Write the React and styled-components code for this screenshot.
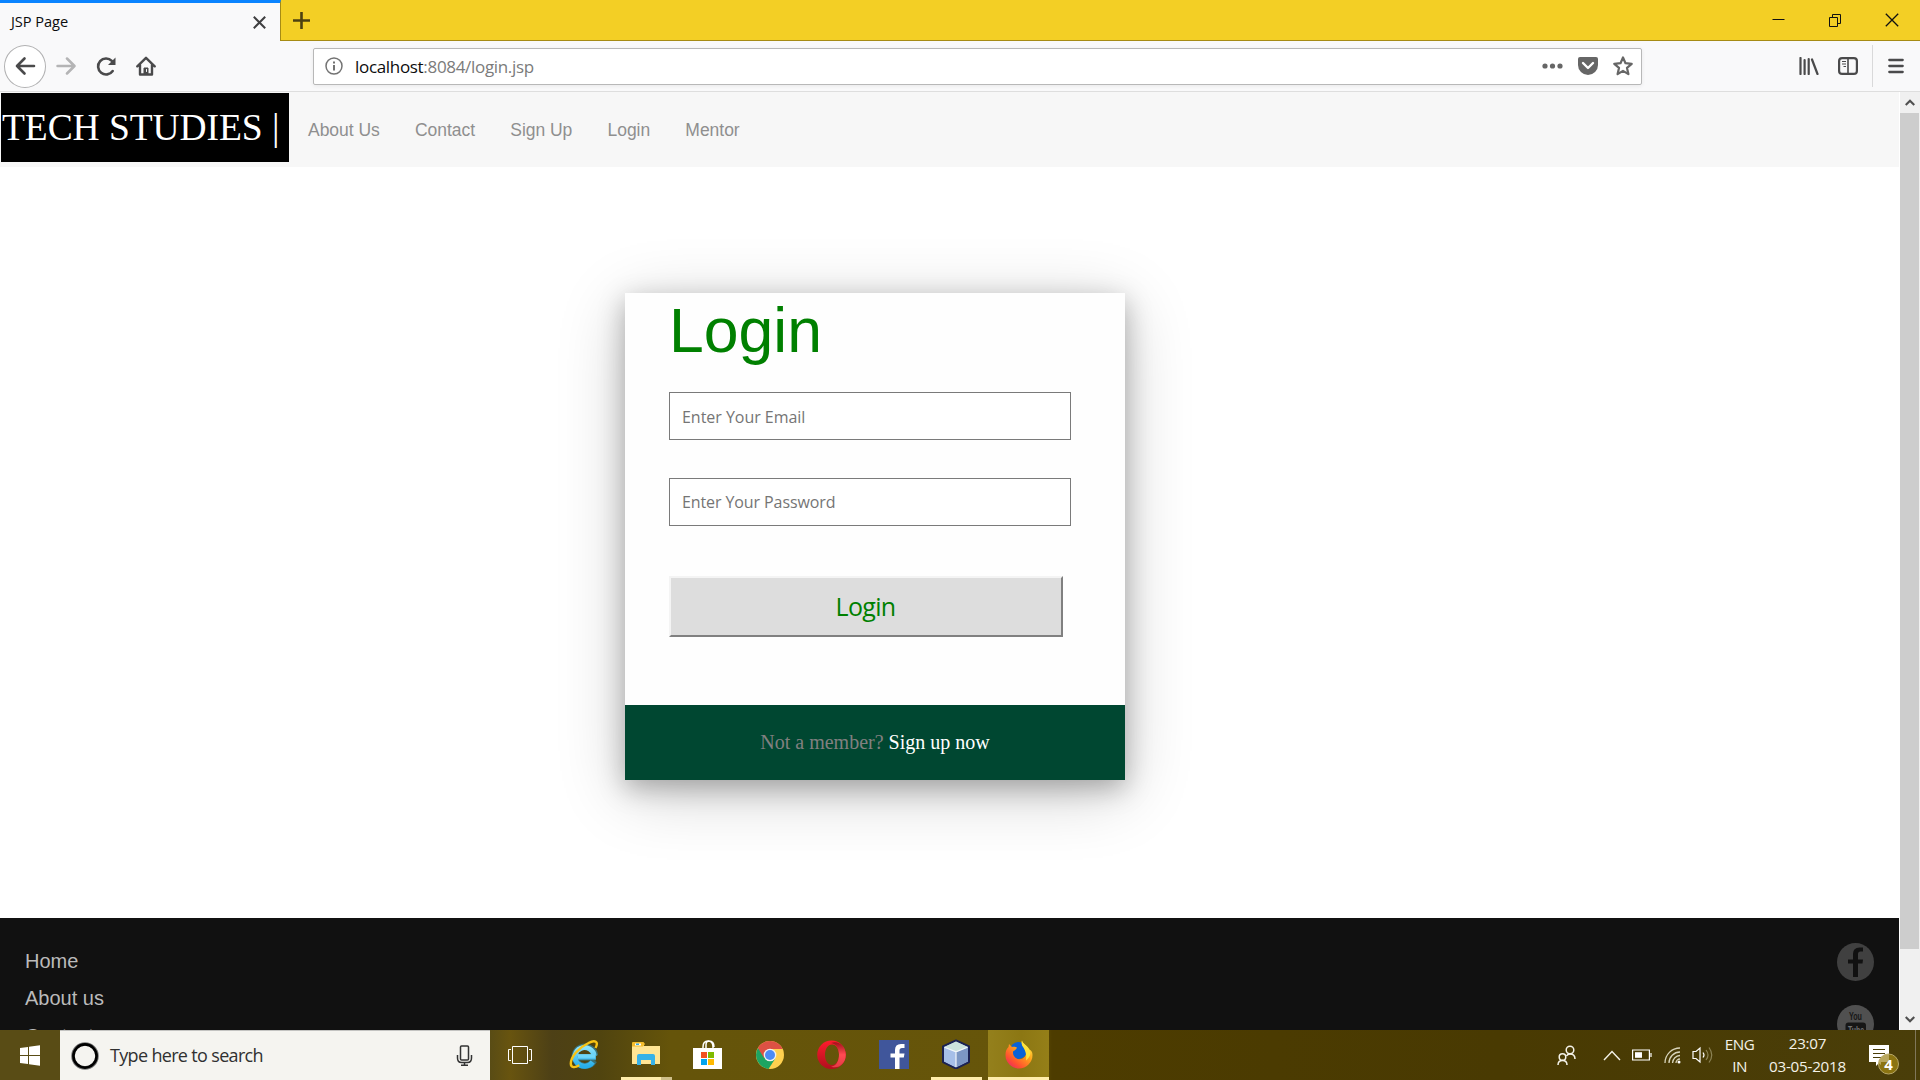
import React from "react";
import styled, { createGlobalStyle } from "styled-components";

const ui = `"Open Sans", "Noto Sans", sans-serif`;
const arial = `"Liberation Sans", Arial, sans-serif`;
const serif = `"Liberation Serif", "Times New Roman", serif`;

const Global = createGlobalStyle`
  *, *::before, *::after { box-sizing: border-box; }
  body { margin: 0; overflow: hidden; }
  svg { display: block; flex: none; }
`;

const Screen = styled.div`
  width: 1920px;
  height: 1080px;
  display: grid;
  grid-template-rows: 41px 51px 938px 50px;
  background: #fff;
  overflow: hidden;
`;

/* Browser chrome */
const TitleBar = styled.div`
  display: flex;
  background: #f3cf25;
  border-bottom: 1px solid #a68b14;
`;
const Tab = styled.div`
  width: 281px;
  height: 41px;
  display: flex;
  align-items: center;
  justify-content: space-between;
  padding: 0 14px 0 11px;
  background: #f9f9fa;
  border-top: 3px solid #0a84ff;
  border-right: 1px solid #a68b14;
`;
const TabTitle = styled.span`
  font: 14.6px/20px ${ui};
  letter-spacing: -0.05px;
  padding-bottom: 2px;
  color: #0c0c0d;
`;
const NewTab = styled.div`
  display: flex;
  align-items: center;
  padding-left: 11px;
  flex: 1;
`;
const WindowButtons = styled.div`
  display: flex;
  align-items: center;
  gap: 43px;
  padding-right: 21px;
`;
const Toolbar = styled.div`
  display: flex;
  align-items: center;
  background: #f9f9fa;
  border-bottom: 1px solid #dedede;
  padding-left: 4px;
`;
const NavButtons = styled.div`
  display: flex;
  align-items: center;
  gap: 20px;
  width: 309px;
  svg:last-child { margin-left: -1px; }
`;
const BackButton = styled.div`
  width: 42px;
  height: 43px;
  border: 1px solid #b1b1b2;
  border-radius: 50%;
  background: #fff;
  display: grid;
  place-items: center;
  margin-right: -10px;
`;
const AddressBar = styled.div`
  width: 1329px;
  height: 37px;
  display: flex;
  align-items: center;
  padding: 0 8px 0 11px;
  background: #fff;
  border: 1px solid #b8b8b8;
  border-radius: 2px;
  box-shadow: 0 1px 4px rgba(0, 0, 0, 0.07);
`;
const Url = styled.span`
  flex: 1;
  margin-left: 12px;
  padding-top: 1px;
  font: 17px/24px ${ui};
  letter-spacing: -0.32px;
  color: #7b7b7b;
  b { font-weight: 400; color: #0c0c0d; }
`;
const AddressActions = styled.div`
  display: flex;
  align-items: center;
  gap: 15px;
`;
const ToolbarRight = styled.div`
  display: flex;
  align-items: center;
  flex: 1;
  justify-content: flex-end;
  padding-right: 16px;
`;
const Separator = styled.div`
  width: 1px;
  height: 42px;
  background: #d9d9da;
  margin: 0 15px 0 14px;
`;

/* Page */
const Viewport = styled.div`
  display: grid;
  grid-template-columns: 1899px 21px;
  overflow: hidden;
`;
const Page = styled.div`
  height: 938px;
  overflow: hidden;
  display: grid;
  grid-template-rows: 75px 751px 112px;
`;
const Navbar = styled.nav`
  display: flex;
  background: #f7f7f7;
  padding: 1px 0 5px 1px;
`;
const Brand = styled.div`
  width: 288px;
  height: 69px;
  background: #000;
  color: #fff;
  padding-left: 1px;
  font: 37.5px/70px ${serif};
  letter-spacing: -0.07px;
  white-space: nowrap;
`;
const NavLinks = styled.div`
  display: flex;
  gap: 35.2px;
  padding-left: 19px;
  font: 17.5px/74px ${arial};
  letter-spacing: -0.03px;
  color: #8f8f8f;
`;
const Main = styled.main`
  padding: 126px 0 0 625px;
`;
const Card = styled.section`
  width: 500px;
  height: 487px;
  display: flex;
  flex-direction: column;
  background: #fefefe;
  box-shadow: 0 8px 25px 0 rgba(0, 0, 0, 0.27), 0 13px 64px 0 rgba(0, 0, 0, 0.2);
`;
const Form = styled.form`
  height: 412px;
  padding: 0 0 0 44px;
`;
const Heading = styled.h1`
  margin: 0;
  height: 99px;
  padding-top: 1px;
  font: 400 62.5px/72px ${arial};
  color: #008000;
`;
const Field = styled.input`
  display: block;
  width: 402px;
  height: 48px;
  margin: 0 0 38px;
  padding: ${(p) => (p.type === "password" ? 0 : 2)}px 12px 0;
  border: 1px solid #7a7a7a;
  border-radius: 0;
  background: #fff;
  font: 16px/24px ${ui};
  letter-spacing: ${(p) => (p.type === "password" ? -0.1 : -0.03)}px;
  outline: none;
  &::placeholder { color: #757575; opacity: 1; }
`;
const Submit = styled.button`
  display: block;
  width: 394px;
  height: 61px;
  margin-top: 50px;
  padding: 0 1px 0 0;
  border: 2px solid;
  border-color: #f4f4f4 #808080 #808080 #f4f4f4;
  background: #ddd;
  color: #008000;
  font: 25px/57px ${ui};
  letter-spacing: -0.7px;
`;
const CardFooter = styled.div`
  height: 75px;
  background: #004731;
  text-align: center;
  font: 20px/75px ${serif};
  color: #808080;
  span { color: #fff; }
`;
const Footer = styled.footer`
  display: flex;
  justify-content: space-between;
  background: #111;
  padding: 24px 25px 0;
  overflow: hidden;
`;
const FooterLinks = styled.div`
  padding-top: 0.6px;
  font: 20px/37.6px ${arial};
  color: #bbb;
`;
const Social = styled.div`
  display: flex;
  flex-direction: column;
  gap: 24px;
  padding-top: 1px;
`;
const Scrollbar = styled.div`
  display: flex;
  flex-direction: column;
  align-items: center;
  background: #f0f0f0;
  border-left: 1px solid #fff;
`;
const ScrollArrow = styled.div`
  height: 21px;
  display: grid;
  place-items: center;
`;
const Thumb = styled.div`
  width: 19px;
  height: 836px;
  margin: 0 1px 60px 0;
  background: #cdcdcd;
`;

/* Taskbar */
const Taskbar = styled.div`
  display: flex;
  background: linear-gradient(90deg, #594c15 0, #594c15 490px, #68540f 510px, #4d4016 552px, #50440f 600px, #65540a 670px, #66550a 1040px, #4d3c00 1052px, #493a02 1500px, #4a3e09 1920px);
`;
const Start = styled.div`
  width: 60px;
  display: grid;
  place-items: center;
`;
const Search = styled.div`
  width: 430px;
  display: flex;
  align-items: center;
  padding: 0 17px 0 11px;
  background: #f5f4f0;
  border-top: 1px solid #c3c3c1;
`;
const SearchText = styled.span`
  flex: 1;
  margin-left: 11px;
  padding-bottom: 1px;
  font: 18px/26px ${ui};
  letter-spacing: -0.67px;
  color: #303030;
`;
const Apps = styled.div`
  display: flex;
  width: 559px;
`;
const TaskItem = styled.div`
  width: ${(p) => (p.$active ? 61 : 62)}px;
  margin-left: ${(p) => (p.$active ? 1 : 0)}px;
  height: 50px;
  display: flex;
  flex-direction: column;
  align-items: center;
  justify-content: space-between;
  padding-top: 9px;
  background: ${(p) => (p.$active ? "linear-gradient(90deg, #94801c, #8c7713 55%, #957f18)" : "transparent")};
  &:first-child { width: 63px; padding-right: 3px; }
`;
const Indicator = styled.div`
  width: ${(p) => p.$w || 0}px;
  height: 3px;
  background: ${(p) => (p.$split ? "linear-gradient(90deg, #ffedab 40px, #cfbf8a 40px)" : "#ffedab")};
`;
const Tray = styled.div`
  flex: 1;
  display: flex;
  justify-content: flex-end;
  align-items: center;
  color: #f4f2e8;
  padding-right: 4px;
`;
const TrayIcons = styled.div`
  display: flex;
  align-items: center;
  gap: 11.3px;
`;
const TrayText = styled.div`
  width: ${(p) => p.$w}px;
  text-align: center;
  font: 15.2px/${(p) => p.$lh || 22}px ${ui};
  letter-spacing: ${(p) => p.$ls || "-0.5px"};
  white-space: pre-line;
  padding-bottom: 1px;
`;
const Notify = styled.div`
  width: 67px;
  height: 50px;
  display: flex;
  justify-content: flex-end;
  padding-right: 16px;
  border-right: 1px solid #80775a;
`;

const Ico = ({ w, h = w, vb, children, ...rest }) => (
  <svg width={w} height={h} viewBox={vb || `0 0 ${w} ${h}`} fill="none" stroke="#4a4a4b" {...rest}>
    {children}
  </svg>
);

const Cross = ({ w, sw, c }) => (
  <Ico w={w} stroke={c} strokeWidth={sw}><path d={`M.8.8 ${w - 0.8} ${w - 0.8}M${w - 0.8}.8.8 ${w - 0.8}`} /></Ico>
);

const BrowserChrome = () => (
  <>
    <TitleBar>
      <Tab><TabTitle>JSP Page</TabTitle><Cross w={13} sw={2} c="#3f3f40" /></Tab>
      <NewTab><Ico w={19} stroke="#4c4111" strokeWidth="2.6"><path d="M9.5 1v17M1 9.5h17" /></Ico></NewTab>
      <WindowButtons>
        <Ico w={13} stroke="#111" strokeWidth="1"><path d="M.5 5.5h12" /></Ico>
        <Ico w={14} stroke="#111" strokeWidth="1"><path d="M1.5 4.5h8v9h-8zM4.500 4V1.500h8v9h-3" /></Ico>
        <Cross w={14} sw={1.3} c="#111" />
      </WindowButtons>
    </TitleBar>
    <Toolbar>
      <NavButtons>
        <BackButton>
          <Ico w={22} strokeWidth="2.6" strokeLinecap="round" strokeLinejoin="round"><path d="M20 11H3M10.500 3.500 3 11l7.500 7.500" /></Ico>
        </BackButton>
        <Ico w={20} h={20} stroke="#b4b4b5" strokeWidth="2.500" strokeLinecap="round" strokeLinejoin="round"><path d="M1.500 10H18M11 2.500 18.500 10 11 17.500" /></Ico>
        <Ico w={21} h={21} strokeWidth="2.600" strokeLinecap="round"><path d="M16.700 15A8 8 0 1 1 15.800 4.800" /><path d="M19.500 1.500v7.500h-7.500z" fill="#4a4a4b" stroke="none" /></Ico>
        <Ico w={20} h={20} strokeWidth="2.400" strokeLinecap="round" strokeLinejoin="round">
          <path d="M1.300 10.300 10 1.800l8.700 8.500M4 9v9.500h12V9" /><path d="M8 18v-6h4v6" fill="#4a4a4b" strokeWidth="1" /><path d="M10.500 13.500v2" stroke="#f9f9fa" strokeWidth="1" />
        </Ico>
      </NavButtons>
      <AddressBar>
        <Ico w={18} stroke="#737373" strokeWidth="1.500"><circle cx="9" cy="9" r="8" /><path d="M9 8v5.500M9 4.500v2" strokeWidth="2" /></Ico>
        <Url><b>localhost</b>:8084/login.jsp</Url>
        <AddressActions>
          <Ico w={21} h={6} stroke="none" fill="#666"><circle cx="3" cy="3" r="2.600" /><circle cx="10.500" cy="3" r="2.600" /><circle cx="18" cy="3" r="2.600" /></Ico>
          <Ico w={20} h={18} stroke="none"><path d="M2 0h16q2 0 2 2v6a10 10 0 0 1-20 0V2q0-2 2-2z" fill="#666" /><path d="m5 6 5 5 5-5" stroke="#fff" strokeWidth="2.400" strokeLinecap="round" strokeLinejoin="round" /></Ico>
          <Ico w={20} h={20} stroke="#666" strokeWidth="2.200" strokeLinejoin="round"><path d="m10 1.500 2.500 5.700 6.200.6-4.700 4.100 1.400 6.200L10 14.900l-5.400 3.200L6 11.900 1.300 7.800l6.200-.6z" /></Ico>
        </AddressActions>
      </AddressBar>
      <ToolbarRight>
        <Ico w={20} h={18} strokeWidth="2.200" strokeLinecap="round"><path d="M1.500 1v16M5.600 3v14M9.700 2v15M13 2.500 18.500 17" /></Ico>
        <Ico w={20} h={18} strokeWidth="2.200" style={{ marginLeft: 19 }}><rect x="1.100" y="1.100" width="17.800" height="15.800" rx="3" /><path d="M10 1v16" strokeWidth="1.600" /><path d="M4 4.500h4M4 7h4M5.500 9.500H8" strokeWidth="1.200" /></Ico>
        <Separator />
        <Ico w={16} h={16} strokeWidth="2.300" strokeLinecap="round"><path d="M1.300 2h13.400M1.300 8h13.400M1.300 14h13.400" /></Ico>
      </ToolbarRight>
    </Toolbar>
  </>
);

const links = ["About Us", "Contact", "Sign Up", "Login", "Mentor"];

const LoginPage = () => (
  <Page>
    <Navbar>
      <Brand>TECH STUDIES |</Brand>
      <NavLinks>{links.map((l) => <span key={l}>{l}</span>)}</NavLinks>
    </Navbar>
    <Main>
      <Card>
        <Form>
          <Heading>Login</Heading>
          <Field placeholder="Enter Your Email" />
          <Field type="password" placeholder="Enter Your Password" />
          <Submit type="button">Login</Submit>
        </Form>
        <CardFooter>Not a member? <span>Sign up now</span></CardFooter>
      </Card>
    </Main>
    <Footer>
      <FooterLinks><div>Home</div><div>About us</div><div>Contact</div></FooterLinks>
      <Social>
        <Ico w={37} h={38} stroke="none">
          <ellipse cx="18.500" cy="19" rx="18.500" ry="19" fill="#404040" />
          <path d="M16 34V20.500h-5v-4h5V11q0-6.500 6.500-6.500h3.500V8.500h-2.500q-2.500 0-2.500 2.500v5.500h5l-.5 4H21V34z" fill="#111" />
        </Ico>
        <Ico w={37} h={38} stroke="none">
          <ellipse cx="18.500" cy="19" rx="18.500" ry="19" fill="#505050" />
          <text x="12" y="15" textLength="13" lengthAdjust="spacingAndGlyphs" fontFamily="Liberation Sans" fontWeight="700" fontSize="11" fill="#161616">You</text>
          <rect x="8.500" y="17.500" width="20.500" height="14" rx="3" fill="#161616" />
          <text x="11" y="28.500" textLength="16" lengthAdjust="spacingAndGlyphs" fontFamily="Liberation Sans" fontWeight="700" fontSize="10.500" fill="#707070">Tube</text>
        </Ico>
      </Social>
    </Footer>
  </Page>
);

const Explorer = () => (
  <Ico w={30} h={30} stroke="none">
    <path d="M1 4h12v3h16v18H1z" fill="#ffe594" /><path d="M1 4q0-1 1-1h10.500L14 5l-2 2.500H1z" fill="#f5bd2c" /><path d="M4 4.500h6v2H4z" fill="#fff" /><path d="M5 4.500h3v1.500H5z" fill="#37a9dc" />
    <path d="M6 26V17q0-2 2-2h14q2 0 2 2v9h-4v-5H10v5z" fill="#37b2e8" />
  </Ico>
);
const Store = () => (
  <Ico w={30} h={30} stroke="none">
    <path d="M10 10V8q0-6 5-6t5 6v2M13 9V6q0-4 3-4 5 0 5 6" stroke="#fff" strokeWidth="1.500" /><path d="M0 9h29v21H0z" fill="#fff" />
    <path d="M8 13h6v6H8z" fill="#f25022" /><path d="M15 13h6v6h-6z" fill="#7fba00" /><path d="M8 20h6v6H8z" fill="#00a4ef" /><path d="M15 20h6v6h-6z" fill="#ffb900" />
  </Ico>
);
const Chrome = () => (
  <Ico w={30} h={30} stroke="none">
    <circle cx="15" cy="16" r="14" fill="#ffd04f" />
    <path d="M15 16 2.900 9A14 14 0 0 0 13.500 29.900L20 20z" fill="#1da462" />
    <path d="M2.900 9A14 14 0 0 1 27.600 10H15L9 19z" fill="#dd5144" />
    <circle cx="15" cy="16" r="6.300" fill="#f1f1f1" /><circle cx="15" cy="16" r="5" fill="#4c8bf5" />
  </Ico>
);
const Opera = () => (
  <Ico w={30} h={30} stroke="none">
    <defs><linearGradient id="op" x2="0" y2="1"><stop stopColor="#ff1b2d" /><stop offset="1" stopColor="#b0101d" /></linearGradient><linearGradient id="op2" x2="0" y2="1"><stop stopColor="#a0101a" /><stop offset=".5" stopColor="#ff4b53" /><stop offset="1" stopColor="#e33c45" /></linearGradient></defs>
    <path fillRule="evenodd" d="M14.500 1.500a14.300 14.300 0 1 1 0 28.600 14.300 14.300 0 0 1 0-28.600zm.5 4c-4.200 0-7 4.500-7 10.300s2.800 10.300 7 10.300 7-4.500 7-10.300S19.200 5.500 15 5.500z" fill="url(#op)" />
    <path d="M14 4c7-3 14.800 2.500 14.800 11.800S21 30.500 14 27.500c5 0 8-5.500 8-11.700S19 4.500 14 4z" fill="url(#op2)" />
  </Ico>
);
const Facebook = () => (
  <Ico w={30} h={30} stroke="none"><path d="M0 1h30v29H0z" fill="#40569b" /><path d="M16 30V18.500h-4.500v-4H16V11q0-6 6-6h3.500v4H23q-2.500 0-2.500 2.500v3h5l-.7 4h-4.300V30z" fill="#fff" /></Ico>
);
const Cube = () => (
  <Ico w={30} h={30} stroke="none">
    <path d="m15 1.500 13 6V23L15 29.500 2 23V7.500z" fill="#b4c8e8" stroke="#1b2253" strokeWidth="2" strokeLinejoin="round" />
    <path d="m15 2.500 12 5.500-12 5-12-5z" fill="#cce3dc" /><path d="M3 8.500 15 13v15.500L3 22.500z" fill="#a6bfe8" /><path d="M27 8.500 15 13v15.500l12-6z" fill="#7c97c4" /><path d="M3.500 8.200 15 12.800l11.500-4.600M15 13v15" stroke="#f2f6fb" strokeWidth="1.200" />
  </Ico>
);
const Firefox = () => (
  <Ico w={30} h={30} stroke="none">
    <defs><linearGradient id="ff" x1=".9" y1="0" x2=".1" y2="1"><stop stopColor="#fff04a" /><stop offset=".4" stopColor="#ffa21a" /><stop offset=".75" stopColor="#ff5030" /><stop offset="1" stopColor="#e3206f" /></linearGradient></defs>
    <circle cx="14.500" cy="11.500" r="8.500" fill="#0a62d8" />
    <path d="M18 1.500c0 3 6 5 6.500 9C28 11 28.500 14 28.500 16A13.500 13.500 0 0 1 1.500 16c0-4 1-6 3-8l.5-3 3 3c2-.5 4 0 5 .8-1 2-2.500 3-4 3.700 0 2 0 3 1 4.500 2 3.500 7 4.500 10.500 1C24 14.500 21 9 18.500 7c-1-2-1-4-.5-5.500z" fill="url(#ff)" />
    <path d="M18 1.500c0 3 6 5 8 10 1 3 0 7-4 10 1-6-1-11-3.500-14.500-1-2-1-4-.5-5.500z" fill="#ffe23c" />
  </Ico>
);
const InternetExplorer = () => (
  <Ico w={30} h={30} stroke="none">
    <defs><linearGradient id="ie" x2="0" y2="1"><stop stopColor="#8be2fb" /><stop offset="1" stopColor="#27aeea" /></linearGradient></defs>
    <path d="M8.500 18.500H27M26.200 16.500a10.300 9.600 0 1 0-1 5" stroke="#239fdd" strokeWidth="6" opacity=".5" />
    <path d="M8.500 18H26.800M25.200 17a9.700 9.300 0 1 0-1.500 6" stroke="url(#ie)" strokeWidth="5" />
    <path d="M9 17h17" stroke="#6fd6f8" strokeWidth="3.600" />
    <path d="M26.500 9C30 2.500 26 .5 19.500 4 10 8.500 2 17.500 1.800 24.500c0 4.500 4.200 4.500 8.500 1.800" stroke="#f8c315" strokeWidth="2.400" />
  </Ico>
);
const TaskView = () => (
  <Ico w={26} h={30} stroke="#fff" strokeWidth="1"><path d="M5.500 7.500h15v17h-15zM4 10.500H1.500v11H4M22 10.500h2.500v11H22" /></Ico>
);

const apps = [
  { icon: TaskView }, { icon: InternetExplorer }, { icon: Explorer, w: 51, split: true }, { icon: Store }, { icon: Chrome },
  { icon: Opera }, { icon: Facebook }, { icon: Cube, w: 51 }, { icon: Firefox, w: 61, active: true },
];

const WindowsTaskbar = () => (
  <Taskbar>
    <Start>
      <Ico w={20} h={21} stroke="none" fill="#fff"><path d="M0 3 8 2v8H0zM9 1.800 20 .3V10H9zM0 11h8v8L0 18zM9 11h11v9.700l-11-1.500z" /></Ico>
    </Start>
    <Search>
      <Ico w={28} stroke="#000"><circle cx="14" cy="14" r="12" stroke="#777" strokeWidth="3.600" /><circle cx="14" cy="14" r="11.600" strokeWidth="2.600" /></Ico>
      <SearchText>Type here to search</SearchText>
      <Ico w={17} h={21} stroke="#333" strokeWidth="1.500"><rect x="4.500" y="1" width="8" height="14" rx="1" /><path d="M1.500 10v3q0 4.500 4 4.500h6q4 0 4-4.500v-3M8.500 17.500V20M5 20.200h7" /></Ico>
    </Search>
    <Apps>
      {apps.map(({ icon: I, w, split, active }, i) => (
        <TaskItem key={i} $active={active}><I /><Indicator $w={w} $split={split} /></TaskItem>
      ))}
    </Apps>
    <Tray>
      <TrayIcons>
        <Ico w={20} h={21} stroke="#f4f2e8" strokeWidth="1.500"><circle cx="13" cy="5" r="3.800" /><circle cx="5.500" cy="12" r="3.300" /><path d="M1 20q0-4.500 4.500-4.500T10 20M9.500 11q1-2 3.500-2 5 0 5 5" /></Ico>
        <Ico w={18} h={11} stroke="#f4f2e8" strokeWidth="1.400" style={{ margin: "0 0 0 15px" }}><path d="M1 10 9 1.500l8 8.500" /></Ico>
        <Ico w={20} h={12} stroke="#fff" strokeWidth="1.200"><path d="M.6 1h16.800v10H.6zM19 4v4" /><path d="M3 3.200h7v5.600H3z" fill="#fff" stroke="none" /></Ico>
        <Ico w={17} h={17} stroke="#d9d5bc" strokeWidth="1.300"><path d="M1 16A15 15 0 0 1 16 1M5 16A11 11 0 0 1 16 5M8.500 16A8 8 0 0 1 16 8.500" /><path d="M12 16a4 4 0 0 1 4-4" /><circle cx="15" cy="15" r="1.500" fill="#fff" stroke="none" /></Ico>
        <Ico w={21} h={18} stroke="#fff" strokeWidth="1.200"><path d="M1 5.500h3l4-3.500v14l-4-3.500H1z" /><path d="M11 6.500q2 2.500 0 5" /><path d="M14 4q4 5 0 10M17 1.500q5.500 7.500 0 15" stroke="#8c8355" /></Ico>
      </TrayIcons>
      <TrayText $w={53}>{"ENG\nIN"}</TrayText>
      <TrayText $w={83} $ls="-0.22px" $lh={23}>{"23:07\n03-05-2018"}</TrayText>
      <Notify>
        <Ico w={32} h={50} stroke="none">
          <path d="M2 15h20v17h-9l-4 4v-4H2z" fill="#fff" /><path d="M6 19.500h12M6 23.500h12M6 27.500h8" stroke="#4a3e09" strokeWidth="1.200" />
          <circle cx="21.500" cy="34" r="10" fill="#8b7411" stroke="#b8a868" strokeWidth="1" />
          <path d="M11.500 33A10 10 0 0 1 22 24v8h-8v3z" fill="#c8b878" opacity=".75" />
          <text x="21.500" y="39.500" textAnchor="middle" fontFamily="Open Sans" fontWeight="700" fontSize="15" fill="#fff">4</text>
        </Ico>
      </Notify>
    </Tray>
  </Taskbar>
);

export default function App() {
  return (
    <>
      <Global />
      <Screen>
        <BrowserChrome />
        <Viewport>
          <LoginPage />
          <Scrollbar>
            <ScrollArrow><Ico w={10} h={7} stroke="#505050" strokeWidth="2.200"><path d="m.7 6 4.300-4.300L9.300 6" /></Ico></ScrollArrow>
            <Thumb />
            <ScrollArrow><Ico w={10} h={7} stroke="#505050" strokeWidth="2.200"><path d="m.7 1 4.300 4.300L9.300 1" /></Ico></ScrollArrow>
          </Scrollbar>
        </Viewport>
        <WindowsTaskbar />
      </Screen>
    </>
  );
}
